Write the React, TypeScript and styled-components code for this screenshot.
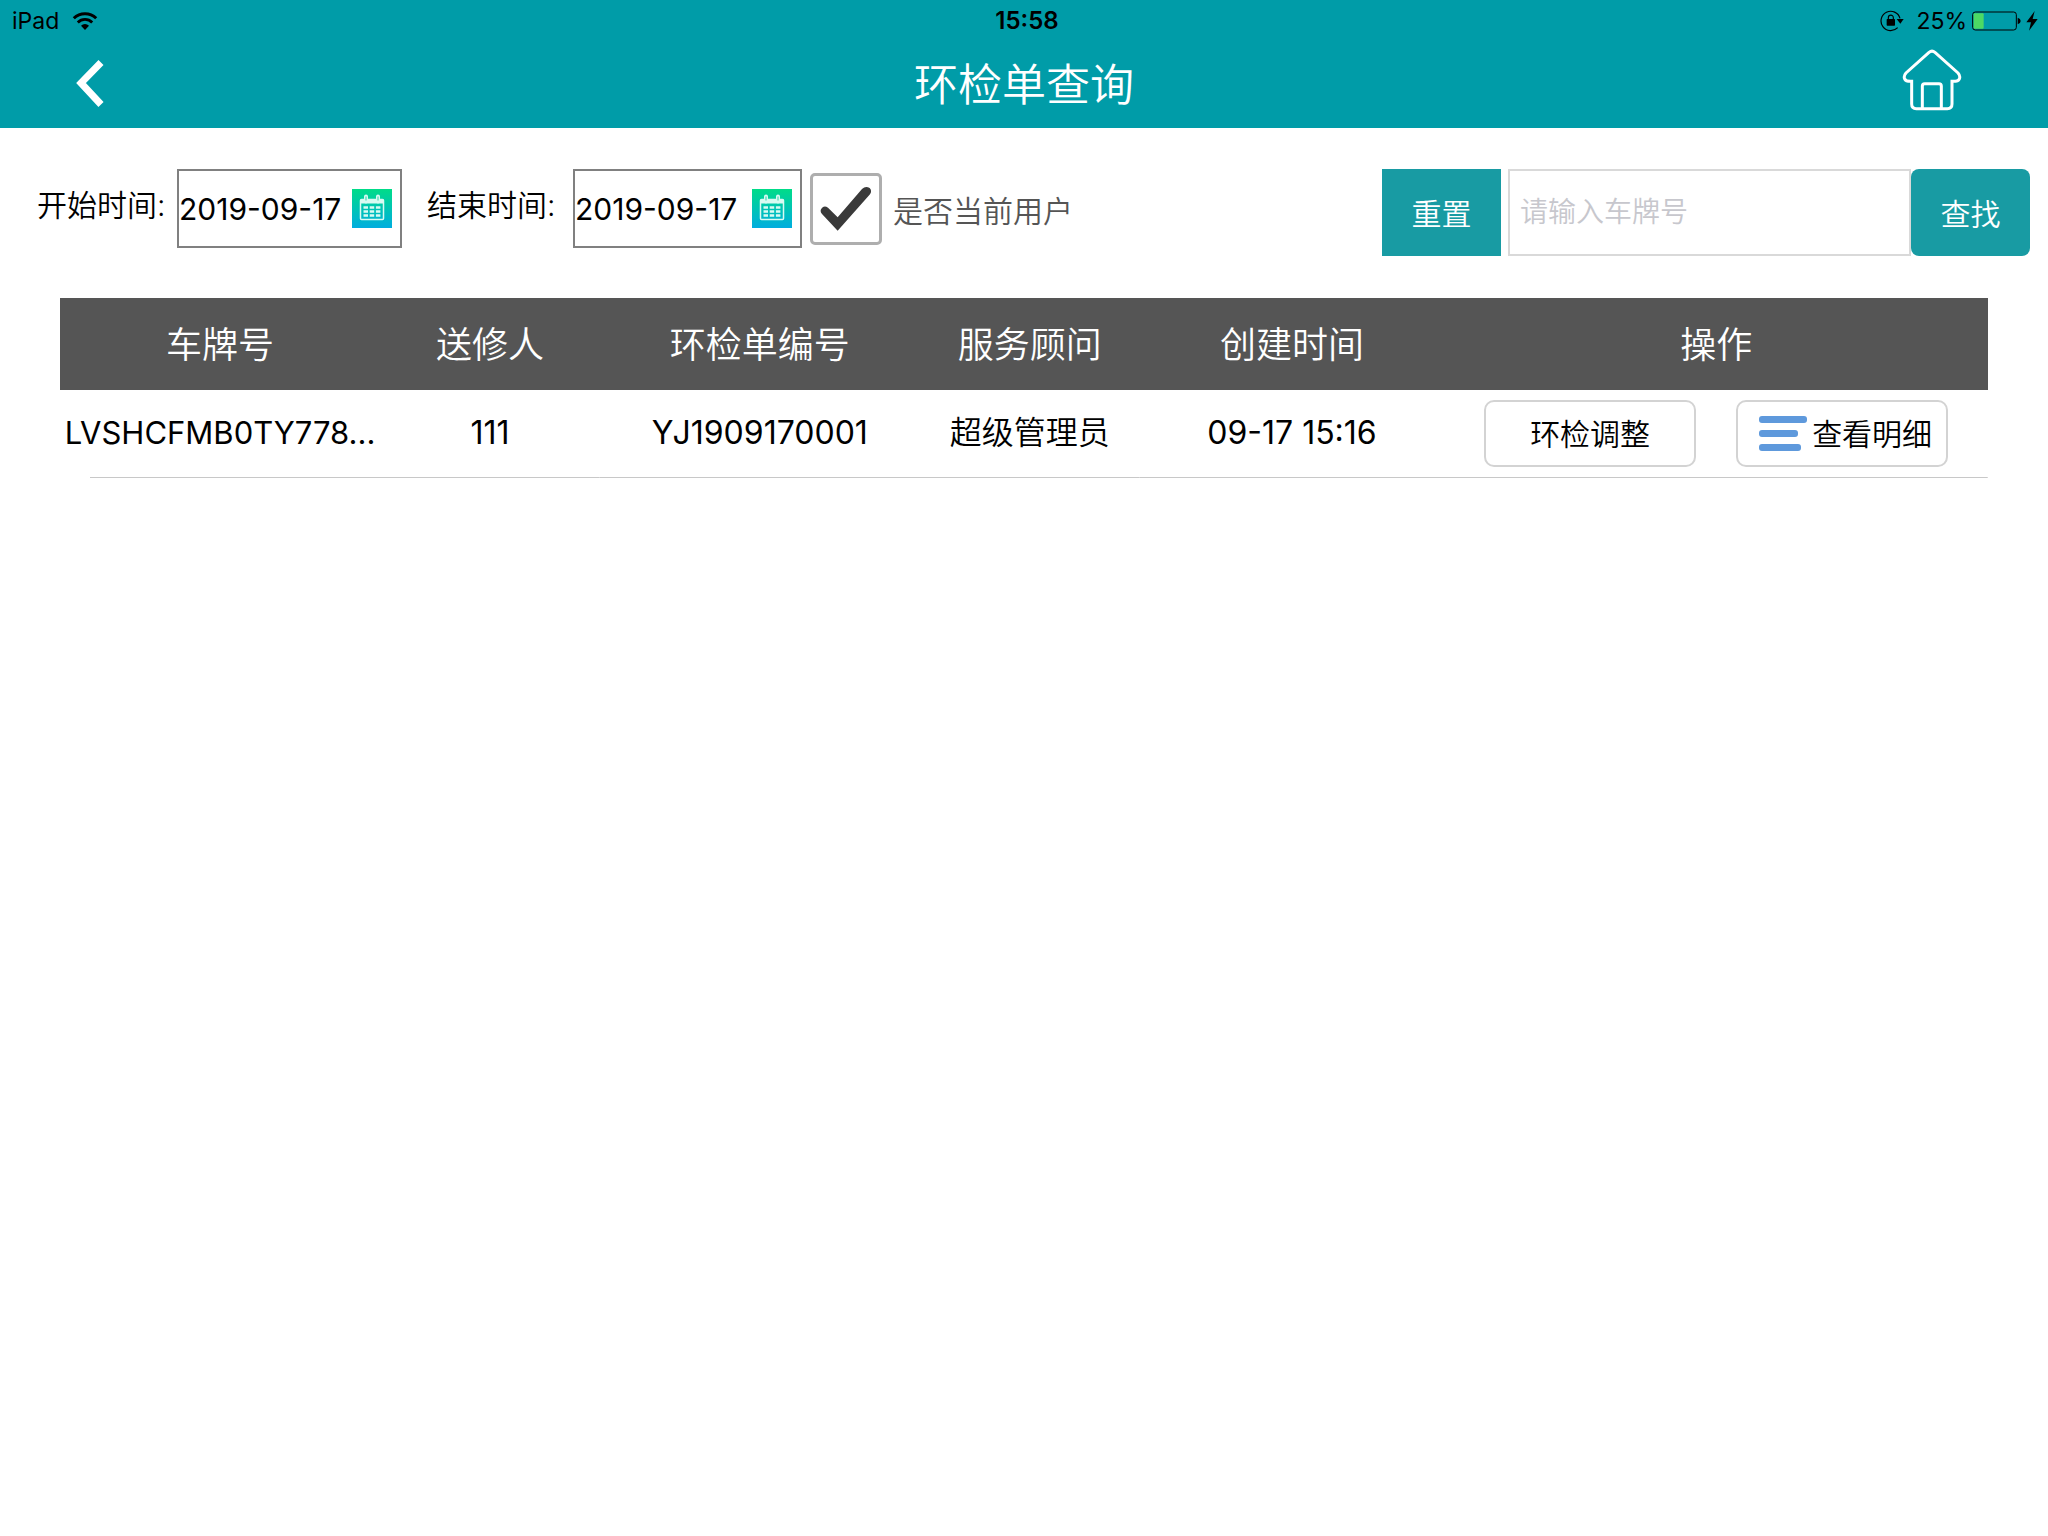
import React, { useState } from "react";
import styled, { createGlobalStyle } from "styled-components";

const GlobalStyle = createGlobalStyle`
  *, *::before, *::after { box-sizing: border-box; }
  body {
    margin: 0;
    background: #fff;
    color: #000;
    font-family: Inter, "Noto Sans CJK SC", sans-serif;
  }
  button, input {
    margin: 0;
    padding: 0;
    border: 0;
    background: none;
    color: inherit;
    font: inherit;
  }
  button { cursor: pointer; }
  svg { display: block; flex: none; }
`;

const Header = styled.header`
  background: #009ca8;
`;

const StatusBar = styled.div`
  display: grid;
  grid-template-columns: 1fr auto 1fr;
  align-items: center;
  height: 42px;
  padding: 0 10px 0 12px;
  font-size: 23px;
  line-height: 42px;
`;

const StatusGroup = styled.div<{ $end?: boolean }>`
  display: flex;
  align-items: center;
  justify-content: ${(p) => (p.$end ? "flex-end" : "flex-start")};
  gap: ${(p) => (p.$end ? 5 : 13)}px;
`;

const Clock = styled.time`
  padding-left: 4px;
  font-size: 24px;
  font-weight: 600;
`;

const Percent = styled.span`
  padding-left: 7px;
`;

const NavBar = styled.nav`
  display: grid;
  grid-template-columns: 1fr auto 1fr;
  align-items: center;
  height: 86px;
  padding: 0 76px;
`;

const NavButton = styled.button<{ $end?: boolean }>`
  justify-self: ${(p) => (p.$end ? "end" : "start")};
  padding-bottom: 2px;
`;

const Title = styled.h1`
  margin: 0;
  color: #fff;
  font-size: 44px;
  font-weight: 350;
  line-height: 64px;
`;

const Filters = styled.form`
  display: flex;
  align-items: flex-start;
  justify-content: space-between;
  padding: 41px 18px 0 37px;
  font-size: 30px;
  font-weight: 350;
`;

const FilterGroup = styled.div`
  display: flex;
  align-items: flex-start;
`;

const DateLabel = styled.label<{ $next?: boolean }>`
  width: ${(p) => (p.$next ? 146 : 140)}px;
  margin-left: ${(p) => (p.$next ? 25 : 0)}px;
  line-height: 72px;
  white-space: nowrap;
`;

const DateBox = styled.div<{ $wide?: boolean }>`
  display: flex;
  align-items: center;
  justify-content: space-between;
  width: ${(p) => (p.$wide ? 229 : 225)}px;
  height: 79px;
  padding-right: 8px;
  border: 2px solid #808080;
`;

const DateInput = styled.input`
  width: 170px;
  height: 75px;
  font-weight: 400;
  outline: none;
`;

const CheckLabel = styled.label`
  display: flex;
  align-items: center;
  gap: 11px;
  height: 80px;
  margin-left: 8px;
  color: #555;
  white-space: nowrap;
  cursor: pointer;
`;

const CheckFrame = styled.span`
  display: grid;
  place-items: center;

  & > * { grid-area: 1 / 1; }
  & > svg { pointer-events: none; visibility: hidden; }
  & > input:checked + svg { visibility: visible; }
`;

const CheckBox = styled.input`
  appearance: none;
  width: 72px;
  height: 72px;
  border: 3px solid #aeaeae;
  border-radius: 5px;
  background: #fff;
`;

const ActionButton = styled.button<{ $rounded?: boolean }>`
  width: 119px;
  height: 87px;
  padding-bottom: 2px;
  border-radius: ${(p) => (p.$rounded ? 8 : 0)}px;
  background: #189ba3;
  color: #fff;
`;

const SearchInput = styled.input`
  width: 403px;
  height: 87px;
  margin-left: 7px;
  padding: 0 10px 2px;
  border: 2px solid #d9d9d9;
  font-size: 28px;
  outline: none;

  &::placeholder {
    color: #c7c7cd;
    opacity: 1;
  }
`;

const Main = styled.main`
  padding: 42px 60px 0;
`;

const Table = styled.table`
  width: 100%;
  border-collapse: separate;
  border-spacing: 0;
  table-layout: fixed;
`;

const HeadCell = styled.th<{ $share: number }>`
  width: ${(p) => p.$share}%;
  height: 92px;
  padding: 0 0 5px;
  background: #555;
  color: #fff;
  font-size: 36px;
  font-weight: 350;
`;

const Cell = styled.td<{ $kind?: "plate" | "name" | "actions" }>`
  height: 88px;
  padding: 0 0 ${(p) => (p.$kind === "actions" ? 1 : 3)}px;
  background: linear-gradient(#c8c8c8, #c8c8c8) right bottom /
    ${(p) => (p.$kind === "plate" ? "calc(100% - 30px)" : "100%")} 1px no-repeat;
  font-size: ${(p) => (p.$kind === "plate" ? 31 : 32)}px;
  font-weight: ${(p) => (p.$kind === "name" || p.$kind === "actions" ? 350 : 400)};
  line-height: 48px;
  text-align: center;
  white-space: nowrap;
`;

const RowActions = styled.div`
  display: flex;
  justify-content: center;
  gap: 40px;
  font-size: 30px;
`;

const RowButton = styled.button<{ $icon?: boolean }>`
  display: flex;
  align-items: center;
  justify-content: center;
  gap: 5px;
  width: 212px;
  height: 67px;
  padding-left: ${(p) => (p.$icon ? 7 : 0)}px;
  border: 2px solid #d3d3d3;
  border-radius: 10px;
`;

const WifiIcon = () => (
  <svg width="26" height="20" viewBox="0 0 26 20" aria-hidden="true">
    <path d="M1.8 7.2a16 16 0 0 1 22.4 0" fill="none" stroke="#000" strokeWidth="3" />
    <path d="M5.8 11.4a10.2 10.2 0 0 1 14.4 0" fill="none" stroke="#000" strokeWidth="2.8" />
    <path d="M9 14.7a5.8 5.8 0 0 1 8 0l-4 4.2z" />
  </svg>
);

const RotationLockIcon = () => (
  <svg width="24" height="22" viewBox="97 28 72 66" aria-hidden="true">
    <path d="M157 53A29 29 0 1 0 150 81" fill="none" stroke="#000" strokeWidth="3.5" />
    <path d="M147 55h21l-10 14z" />
    <rect x="117" y="55" width="25" height="20" rx="2" />
    <path d="M122 56v-5a7.500 7.500 0 0 1 15 0v5" fill="none" stroke="#000" strokeWidth="3.500" />
  </svg>
);

const BatteryIcon = () => (
  <svg width="49" height="20" viewBox="373 32 147 60" aria-hidden="true">
    <rect x="375" y="35" width="131" height="54" rx="8" fill="none" stroke="#000" strokeWidth="3" />
    <rect x="378" y="39" width="30" height="46" rx="3" fill="#4cd964" />
    <path d="M510 52q9 3 9 10t-9 10z" />
  </svg>
);

const BoltIcon = () => (
  <svg width="12" height="20" viewBox="535 30 36 60" aria-hidden="true">
    <path d="M561 30L536 64h14l-6 25 26-35h-15z" />
  </svg>
);

const BackIcon = () => (
  <svg width="28" height="50" viewBox="0 0 28 50" aria-hidden="true">
    <path d="M25 3.500L5 24l20 21.500" fill="none" stroke="#fff" strokeWidth="7" />
  </svg>
);

const HomeIcon = () => (
  <svg width="80" height="70" viewBox="132 147 240 210" aria-hidden="true">
    <g fill="none" stroke="#fff" strokeWidth="9">
      <path d="M243 157Q252 150 261 157L330 219Q338 228 334 237Q330 245 312 244V312Q312 326 298 326H205Q191 326 191 312V244Q174 245 170 237Q166 228 174 219Z" />
      <path d="M223 326V258Q223 251 230 251H273Q280 251 280 258V326" />
    </g>
  </svg>
);

const CalendarIcon = ({ id }: { id: string }) => (
  <svg width="40" height="39" viewBox="0 0 40 39" aria-hidden="true">
    <defs>
      <linearGradient id={id} x1="0" y1="0" x2="0" y2="1">
        <stop offset="0" stopColor="#00dc88" />
        <stop offset="1" stopColor="#00addf" />
      </linearGradient>
    </defs>
    <rect width="40" height="39" fill={`url(#${id})`} />
    <g fill="none" stroke="#d9faf2">
      <rect x="8.500" y="10.500" width="23" height="20" rx="1" strokeWidth="1.500" />
      <path d="M8.500 12.500h23" strokeWidth="4" />
      <path d="M14 7.500v5M26 7.500v5" strokeWidth="4" strokeLinecap="round" />
      <path d="M11.500 18.500h17M11.500 22.500h17M11.500 26.500h17" strokeWidth="2.500" strokeDasharray="4.500 1.700" />
    </g>
    <path d="M14 7.500v4M26 7.500v4" stroke="#2fd3a8" strokeWidth="1" />
  </svg>
);

const TickIcon = () => (
  <svg width="52" height="46" viewBox="60 113 156 138" aria-hidden="true">
    <path d="M113 247L66 197Q59 189 64 181Q72 170 84 178L113 207L186 122Q197 111 209 119Q217 127 210 138Z" fill="#3a3a3a" />
  </svg>
);

const ListIcon = () => (
  <svg width="48" height="35" viewBox="0 0 48 35" fill="#5e99dc" aria-hidden="true">
    <rect width="48" height="7" rx="3" />
    <rect y="14" width="39" height="7" rx="3" />
    <rect y="28" width="42" height="7" rx="3" />
  </svg>
);

const columns = [
  { title: "车牌号", share: 16.6 },
  { title: "送修人", share: 11.4 },
  { title: "环检单编号", share: 16.6 },
  { title: "服务顾问", share: 11.4 },
  { title: "创建时间", share: 15.8 },
  { title: "操作", share: 28.2 },
];

const orders = [
  { plate: "LVSHCFMB0TY778...", sender: "111", code: "YJ1909170001", advisor: "超级管理员", created: "09-17 15:16" },
];

export default function App() {
  const [start, setStart] = useState("2019-09-17");
  const [end, setEnd] = useState("2019-09-17");
  const [mine, setMine] = useState(true);
  const [plate, setPlate] = useState("");

  return (
    <>
      <GlobalStyle />
      <Header>
        <StatusBar>
          <StatusGroup>
            <span>iPad</span>
            <WifiIcon />
          </StatusGroup>
          <Clock>15:58</Clock>
          <StatusGroup $end>
            <RotationLockIcon />
            <Percent>25%</Percent>
            <BatteryIcon />
            <BoltIcon />
          </StatusGroup>
        </StatusBar>
        <NavBar>
          <NavButton type="button" aria-label="返回"><BackIcon /></NavButton>
          <Title>环检单查询</Title>
          <NavButton type="button" aria-label="首页" $end><HomeIcon /></NavButton>
        </NavBar>
      </Header>

      <Filters onSubmit={(e) => e.preventDefault()}>
        <FilterGroup>
          <DateLabel htmlFor="start">开始时间:</DateLabel>
          <DateBox>
            <DateInput id="start" value={start} onChange={(e) => setStart(e.target.value)} />
            <CalendarIcon id="cal-start" />
          </DateBox>
          <DateLabel htmlFor="end" $next>结束时间:</DateLabel>
          <DateBox $wide>
            <DateInput id="end" value={end} onChange={(e) => setEnd(e.target.value)} />
            <CalendarIcon id="cal-end" />
          </DateBox>
          <CheckLabel>
            <CheckFrame>
              <CheckBox type="checkbox" checked={mine} onChange={(e) => setMine(e.target.checked)} />
              <TickIcon />
            </CheckFrame>
            是否当前用户
          </CheckLabel>
        </FilterGroup>
        <FilterGroup>
          <ActionButton type="button" onClick={() => setPlate("")}>重置</ActionButton>
          <SearchInput
            aria-label="车牌号"
            placeholder="请输入车牌号"
            value={plate}
            onChange={(e) => setPlate(e.target.value)}
          />
          <ActionButton type="submit" $rounded>查找</ActionButton>
        </FilterGroup>
      </Filters>

      <Main>
        <Table>
          <thead>
            <tr>
              {columns.map((c) => (
                <HeadCell key={c.title} scope="col" $share={c.share}>{c.title}</HeadCell>
              ))}
            </tr>
          </thead>
          <tbody>
            {orders.map((o) => (
              <tr key={o.code}>
                <Cell $kind="plate">{o.plate}</Cell>
                <Cell>{o.sender}</Cell>
                <Cell>{o.code}</Cell>
                <Cell $kind="name">{o.advisor}</Cell>
                <Cell>{o.created}</Cell>
                <Cell $kind="actions">
                  <RowActions>
                    <RowButton type="button">环检调整</RowButton>
                    <RowButton type="button" $icon><ListIcon />查看明细</RowButton>
                  </RowActions>
                </Cell>
              </tr>
            ))}
          </tbody>
        </Table>
      </Main>
    </>
  );
}
